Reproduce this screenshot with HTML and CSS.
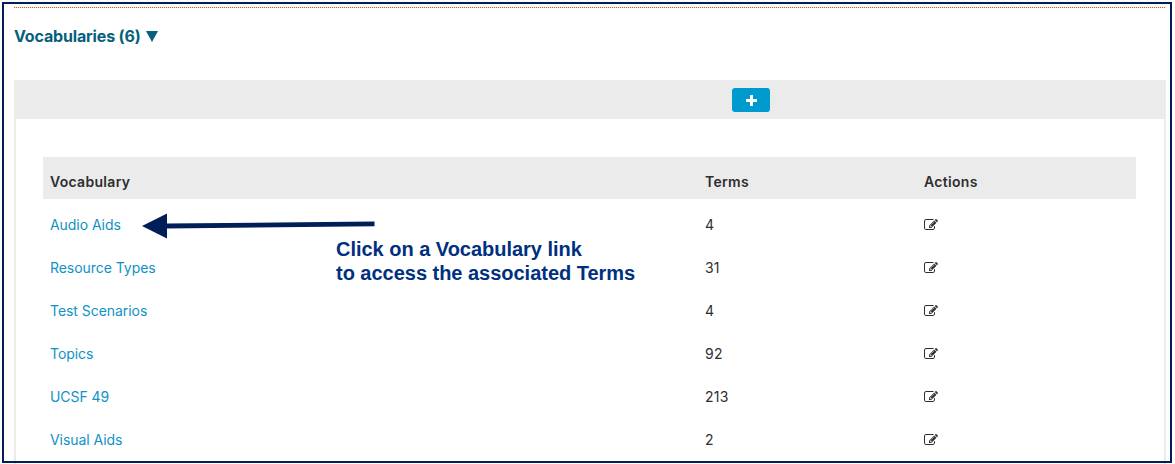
FILE: index.html
```html
<!DOCTYPE html>
<html lang="en">
<head>
<meta charset="utf-8">
<title>Vocabularies</title>
<link rel="stylesheet" href="styles.css">
</head>
<body>
<svg class="sprites" aria-hidden="true">
  <symbol id="edit" viewBox="0 0 1792 1792"><path d="M888 1184l116-116-152-152-116 116v56h96v96h56zm440-720q-16-16-33 1l-350 350q-17 17-1 33t33-1l350-350q17-17 1-33zm80 594v190q0 119-84.500 203.500t-203.500 84.500h-832q-119 0-203.500-84.500t-84.500-203.500v-832q0-119 84.500-203.500t203.500-84.500h832q63 0 117 25 15 7 18 23 3 17-9 29l-49 49q-14 14-32 8-23-6-45-6h-832q-66 0-113 47t-47 113v832q0 66 47 113t113 47h832q66 0 113-47t47-113v-126q0-13 9-22l64-64q15-15 35-7t20 29zm-96-738l288 288-672 672h-288v-288zm444 132l-92 92-288-288 92-92q28-28 68-28t68 28l152 152q28 28 28 68t-28 68z"/></symbol>
</svg>
<main class="page">
  <h2 class="title">Vocabularies (6)<svg class="caret" viewBox="0 0 12 11"><path d="M0 0H12L6 11Z"/></svg></h2>
  <section class="panel">
    <div class="toolbar"><button class="add" aria-label="Add"><svg viewBox="0 0 11 11"><path d="M4 0h3v4h4v3H7v4H4V7H0V4h4z"/></svg></button></div>
    <div class="table">
      <div class="row head"><span>Vocabulary</span><span>Terms</span><span>Actions</span></div>
      <div class="row"><a>Audio Aids</a><span>4</span><svg class="edit"><use href="#edit"/></svg></div>
      <div class="row"><a>Resource Types</a><span>31</span><svg class="edit"><use href="#edit"/></svg></div>
      <div class="row"><a>Test Scenarios</a><span>4</span><svg class="edit"><use href="#edit"/></svg></div>
      <div class="row"><a>Topics</a><span>92</span><svg class="edit"><use href="#edit"/></svg></div>
      <div class="row"><a>UCSF 49</a><span>213</span><svg class="edit"><use href="#edit"/></svg></div>
      <div class="row"><a>Visual Aids</a><span>2</span><svg class="edit"><use href="#edit"/></svg></div>
    </div>
  </section>
</main>
<svg class="arrow" viewBox="0 0 240 30"><path d="M2 16L27 3.500V13.500L234.500 11.500V16.300L27 18.500V28.500Z"/></svg>
<p class="note">Click on a Vocabulary link<br>to access the associated Terms</p>
<div class="frame"></div>
</body>
</html>
```
FILE: styles.css
```css
* { box-sizing: border-box; }
body { margin: 0; height: 464px; overflow: hidden; position: relative; background: #fff; color: #2e2e2e; font: 14px/20px Inter, "Liberation Sans", sans-serif; }
.sprites { position: absolute; width: 0; height: 0; }
.page { padding: 7px 9px 0 14px; height: 464px; overflow: hidden; }
.title { margin: 0; height: 73px; padding-top: 19px; display: flex; align-items: flex-start; color: #055f7d; font-size: 16px; font-weight: 700; letter-spacing: -0.15px; line-height: 20px; background: repeating-linear-gradient(90deg, #b86b1c 0 1px, #f6e6d5 1px 2px) top / 100% 1px no-repeat; }
.caret { width: 12px; height: 11px; margin: 5px 0 0 5px; fill: #055f7d; }
.panel { height: 400px; border: solid #ebebeb; border-width: 0 2px; }
.toolbar { height: 39px; padding: 8px 0 0 716px; background: #ebebeb; }
.add { display: flex; align-items: center; justify-content: center; width: 38px; height: 24px; border: 0; border-radius: 3px; padding: 0; background: #009bce; }
.add svg { width: 11px; height: 11px; fill: #fff; }
.table { margin: 38px 28px 0 27px; }
.row { display: grid; grid-template-columns: 655px 219px 1fr; align-items: center; height: 43px; padding: 8px 0 0 7px; }
.row a { color: #0f92c5; letter-spacing: -0.05px; }
.row span { letter-spacing: 0.2px; }
.head { height: 42px; background: #ebebeb; font-weight: 600; }
.head span { letter-spacing: 0.3px; }
.edit { width: 14px; height: 14px; fill: #2e2e2e; }
.arrow { position: absolute; left: 140px; top: 210px; width: 240px; height: 30px; fill: #001e57; }
.note { position: absolute; left: 336px; top: 237px; margin: 0; color: #003080; font: bold 20px/24px "Liberation Sans", sans-serif; letter-spacing: -0.02px; white-space: nowrap; }
.frame { position: absolute; left: 2px; top: 2px; width: 1170px; height: 461px; border: 2px solid #001e57; }
```
